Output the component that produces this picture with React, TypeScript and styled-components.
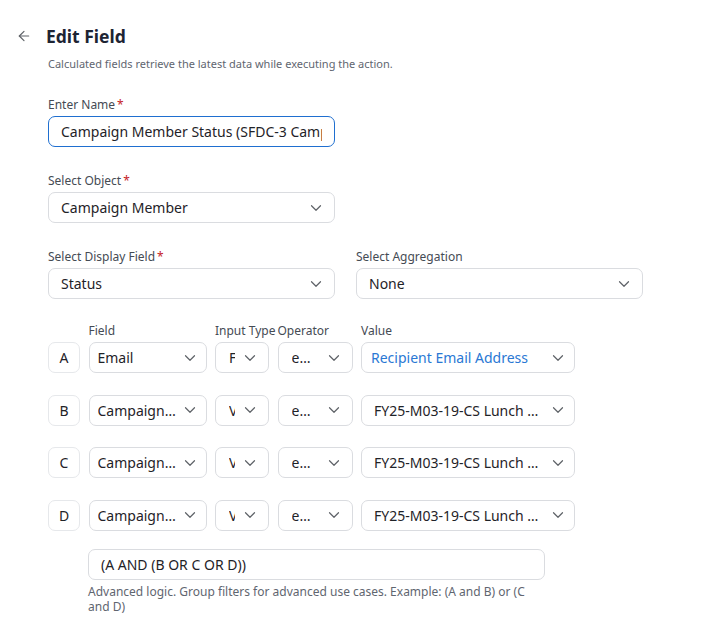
import React from "react";
import styled, { createGlobalStyle } from "styled-components";
import { ArrowLeft, ChevronDown } from "lucide-react";

const GlobalStyle = createGlobalStyle`
  body {
    margin: 0;
    background: #ffffff;
    font-family: "Noto Sans", "Open Sans", sans-serif;
    color: #1f2328;
  }
`;

const Page = styled.div`
  padding: 24px 0 24px 16px;
`;

const Header = styled.div`
  display: flex;
  align-items: center;
  gap: 14px;
  height: 24px;
  color: #5f6368;
`;

const Title = styled.h1`
  margin: 0;
  font-size: 17.5px;
  font-weight: 700;
  line-height: 24px;
  color: #1d2433;
`;

const Body = styled.div`
  margin-left: 32px;
  display: flex;
  flex-direction: column;
`;

const Subtitle = styled.p`
  margin: 8px 0 0;
  font-size: 11px;
  line-height: 16px;
  color: #5f6670;
`;

const FieldGroup = styled.div<{ $top: number; $width?: number }>`
  display: flex;
  flex-direction: column;
  gap: 3.5px;
  margin-top: ${({ $top }) => $top}px;
  width: ${({ $width }) => ($width ? `${$width}px` : "auto")};
`;

const Label = styled.label`
  font-size: 12px;
  line-height: 16px;
  color: #454b54;
  white-space: nowrap;
`;

const Required = styled.span`
  color: #c5221f;
  margin-left: 2px;
`;

const TextBox = styled.div<{ $focused?: boolean; $pad?: number }>`
  height: 31px;
  box-sizing: border-box;
  display: flex;
  align-items: center;
  padding: 0 ${({ $pad }) => $pad ?? 12}px;
  border: 1px solid ${({ $focused }) => ($focused ? "#1f6fd0" : "#dadce0")};
  border-radius: 7px;
  font-size: 14px;
  color: #1f2328;
`;

const TextValue = styled.span`
  flex: 1;
  min-width: 0;
  overflow: hidden;
  white-space: nowrap;
`;

const SelectBox = styled.div<{ $pad: number; $right: number; $gap: number }>`
  height: 31px;
  box-sizing: border-box;
  display: flex;
  align-items: center;
  gap: ${({ $gap }) => $gap}px;
  padding: 0 ${({ $right }) => $right}px 0 ${({ $pad }) => $pad}px;
  border: 1px solid #dadce0;
  border-radius: 7px;
  font-size: 14px;
  color: #1f2328;
  background: #fff;
  min-width: 0;
  svg {
    flex: none;
    color: #5f6368;
  }
`;

const SelectText = styled.span<{ $link?: boolean; $clip?: boolean }>`
  flex: 1;
  min-width: 0;
  overflow: hidden;
  white-space: nowrap;
  text-overflow: ${({ $clip }) => ($clip ? "clip" : "ellipsis")};
  color: ${({ $link }) => ($link ? "#2a78d4" : "#1f2328")};
`;

const TwoCols = styled.div`
  display: flex;
  gap: 21px;
`;

const FilterGrid = styled.div`
  display: grid;
  grid-template-columns: 32px 118px 54px 75px 214px;
  column-gap: 8.5px;
  margin-top: 24px;
`;

const ColHead = styled.div`
  font-size: 12px;
  line-height: 16px;
  color: #454b54;
  white-space: nowrap;
  margin-bottom: 3px;
`;

const Letter = styled.div`
  height: 31px;
  box-sizing: border-box;
  display: flex;
  align-items: center;
  justify-content: center;
  border: 1px solid #e6e8eb;
  border-radius: 7px;
  font-size: 14px;
  color: #1f2328;
`;

const RowCell = styled.div<{ $first?: boolean }>`
  margin-top: ${({ $first }) => ($first ? 0 : 21.5)}px;
  min-width: 0;
`;

const LogicWrap = styled.div`
  margin-left: 40px;
  margin-top: 18px;
  width: 457px;
  display: flex;
  flex-direction: column;
`;

const Hint = styled.p`
  margin: 4px 0 0;
  font-size: 12px;
  line-height: 15px;
  color: #5f6670;
`;

type Filter = {
  key: string;
  field: string;
  inputType: string;
  operator: string;
  value: string;
  link?: boolean;
};

const filters: Filter[] = [
  { key: "A", field: "Email", inputType: "Field", operator: "equals", value: "Recipient Email Address", link: true },
  { key: "B", field: "Campaign Name", inputType: "Value", operator: "equals", value: "FY25-M03-19-CS Lunch and Learn" },
  { key: "C", field: "Campaign Name", inputType: "Value", operator: "equals", value: "FY25-M03-19-CS Lunch and Learn" },
  { key: "D", field: "Campaign Name", inputType: "Value", operator: "equals", value: "FY25-M03-19-CS Lunch and Learn" },
];

type SelectProps = {
  text: string;
  pad?: number;
  right?: number;
  gap?: number;
  link?: boolean;
  clip?: boolean;
};

const Select: React.FC<SelectProps> = ({ text, pad = 12, right = 9, gap = 4, link, clip }) => (
  <SelectBox $pad={pad} $right={right} $gap={gap}>
    <SelectText $link={link} $clip={clip}>{text}</SelectText>
    <ChevronDown size={18} strokeWidth={1.6} />
  </SelectBox>
);

export default function App() {
  return (
    <>
      <GlobalStyle />
      <Page>
        <Header>
          <ArrowLeft size={16} strokeWidth={1.8} />
          <Title>Edit Field</Title>
        </Header>
        <Body>
          <Subtitle>Calculated fields retrieve the latest data while executing the action.</Subtitle>

          <FieldGroup $top={24.5} $width={287}>
            <Label>Enter Name<Required>*</Required></Label>
            <TextBox $focused $pad={12}>
              <TextValue>Campaign Member Status (SFDC-3 Campaign Member)</TextValue>
            </TextBox>
          </FieldGroup>

          <FieldGroup $top={25.5} $width={287}>
            <Label>Select Object<Required>*</Required></Label>
            <Select text="Campaign Member" />
          </FieldGroup>

          <TwoCols>
            <FieldGroup $top={25.5} $width={287}>
              <Label>Select Display Field<Required>*</Required></Label>
              <Select text="Status" />
            </FieldGroup>
            <FieldGroup $top={25.5} $width={287}>
              <Label>Select Aggregation</Label>
              <Select text="None" />
            </FieldGroup>
          </TwoCols>

          <FilterGrid>
            <div />
            <ColHead>Field</ColHead>
            <ColHead>Input Type</ColHead>
            <ColHead>Operator</ColHead>
            <ColHead>Value</ColHead>
            {filters.map((f, i) => (
              <React.Fragment key={f.key}>
                <RowCell $first={i === 0}>
                  <Letter>{f.key}</Letter>
                </RowCell>
                <RowCell $first={i === 0}>
                  <Select text={f.field} pad={8} right={7} />
                </RowCell>
                <RowCell $first={i === 0}>
                  <Select text={f.inputType} pad={13} right={9} gap={6} clip />
                </RowCell>
                <RowCell $first={i === 0}>
                  <Select text={f.operator} pad={13} right={9} gap={10} />
                </RowCell>
                <RowCell $first={i === 0}>
                  <Select text={f.value} pad={i === 0 ? 9 : 12} right={7} link={f.link} />
                </RowCell>
              </React.Fragment>
            ))}
          </FilterGrid>

          <LogicWrap>
            <TextBox $pad={12}>
              <TextValue>(A AND (B OR C OR D))</TextValue>
            </TextBox>
            <Hint>Advanced logic. Group filters for advanced use cases. Example: (A and B) or (C and D)</Hint>
          </LogicWrap>
        </Body>
      </Page>
    </>
  );
}
